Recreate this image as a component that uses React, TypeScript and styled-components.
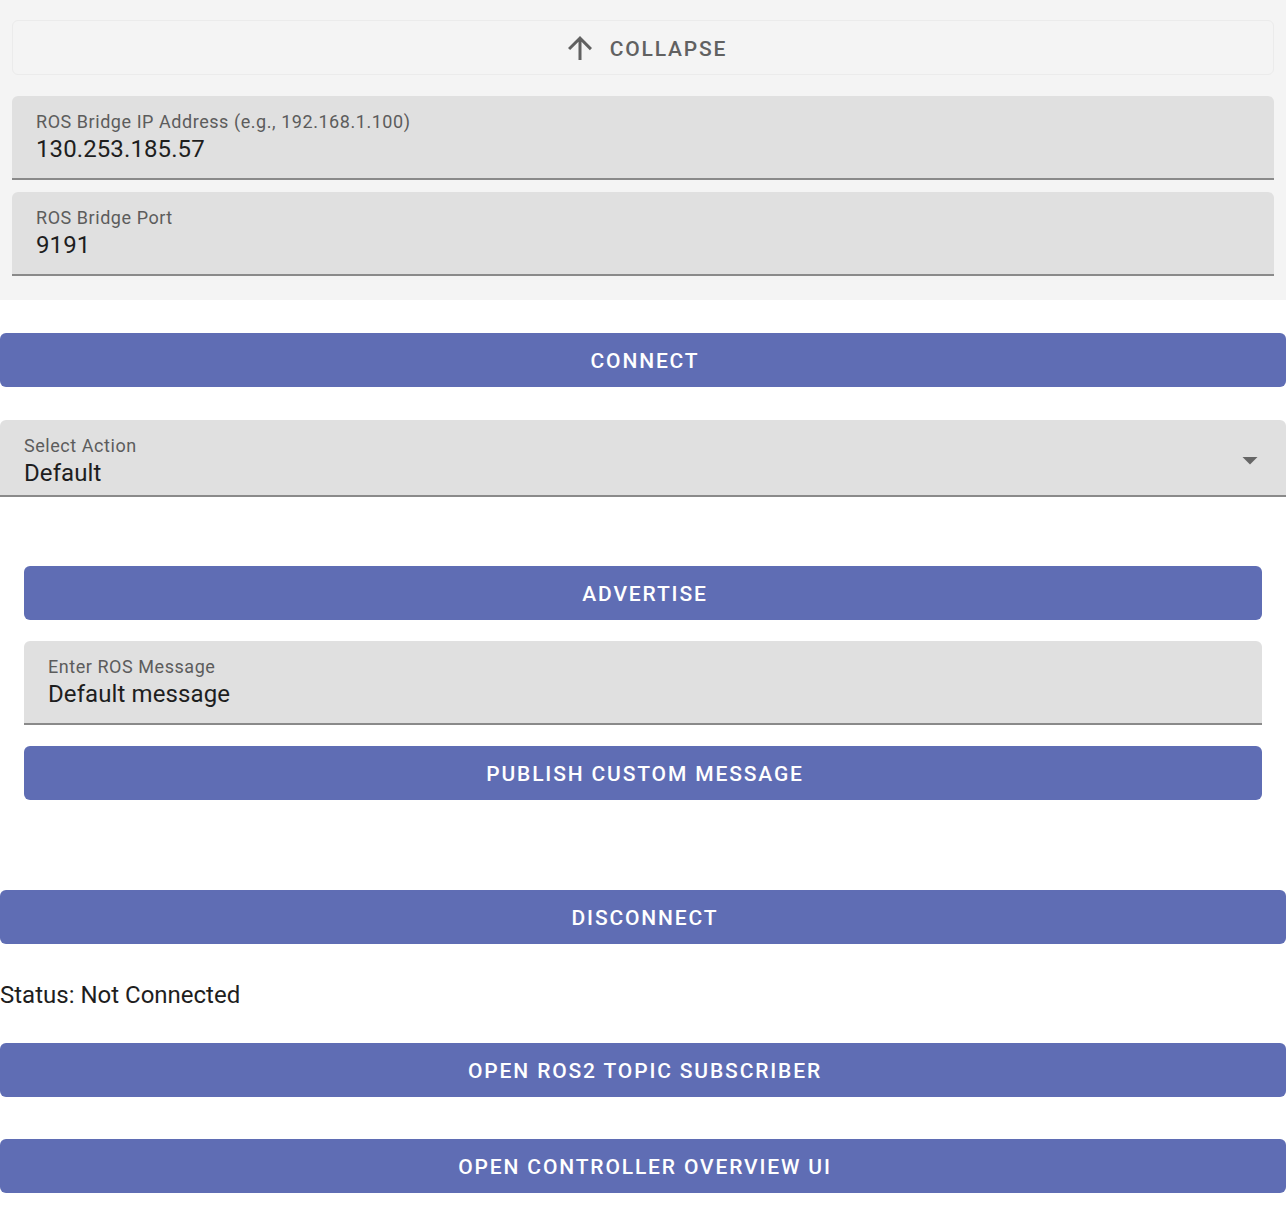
import React, { FC } from "react";
import styled, { createGlobalStyle } from "styled-components";

const GlobalStyle = createGlobalStyle`
  body {
    margin: 0;
    background: #ffffff;
    font-family: Roboto, "Liberation Sans", sans-serif;
  }
`;

const Colors = {
  Primary: "#5f6db4",
  Panel: "#f4f4f4",
  Field: "#e0e0e0",
  Underline: "#8a8a8a",
  Label: "#5c5c5c",
  Text: "#1e1e1e",
};

interface FieldProps {
  label: string;
  value: string;
}

const TextField: FC<FieldProps> = ({ label, value }) => (
  <FieldBox>
    <FieldLabel>{label}</FieldLabel>
    <FieldValue>{value}</FieldValue>
  </FieldBox>
);

const SelectField: FC<FieldProps> = ({ label, value }) => (
  <SelectBox>
    <div>
      <FieldLabel>{label}</FieldLabel>
      <FieldValue>{value}</FieldValue>
    </div>
    <svg width="36" height="36" viewBox="0 0 24 24">
      <path d="M7 10l5 5 5-5z" fill="#666666" />
    </svg>
  </SelectBox>
);

const App: FC = () => {
  return (
    <>
      <GlobalStyle />
      <Page>
        <SettingsPanel>
          <CollapseBar>
            <svg width="36" height="36" viewBox="0 0 24 24">
              <path
                d="M4 12l1.41 1.41L11 7.83V20h2V7.83l5.58 5.59L20 12l-8-8-8 8z"
                fill="#616161"
              />
            </svg>
            <span>Collapse</span>
          </CollapseBar>
          <PanelFields>
            <TextField label="ROS Bridge IP Address (e.g., 192.168.1.100)" value="130.253.185.57" />
            <TextField label="ROS Bridge Port" value="9191" />
          </PanelFields>
        </SettingsPanel>

        <Button $top={33}>Connect</Button>

        <SelectWrap>
          <SelectField label="Select Action" value="Default" />
        </SelectWrap>

        <ActionSection>
          <Button>Advertise</Button>
          <TextField label="Enter ROS Message" value="Default message" />
          <Button>Publish Custom Message</Button>
        </ActionSection>

        <Button $top={90}>Disconnect</Button>
        <Status>Status: Not Connected</Status>
        <Button>Open ROS2 Topic Subscriber</Button>
        <Button $top={42}>Open Controller Overview UI</Button>
      </Page>
    </>
  );
};

export default App;

const Page = styled.div`
  width: 100%;
  display: flex;
  flex-direction: column;
  padding-bottom: 33px;
`;

const SettingsPanel = styled.section`
  background-color: ${Colors.Panel};
  padding: 20px 12px 24px;
  display: flex;
  flex-direction: column;
`;

const CollapseBar = styled.div`
  height: 55px;
  box-sizing: border-box;
  border: 1px solid #ebebeb;
  border-radius: 6px;
  padding: 2px 0 0 3px;
  display: flex;
  align-items: center;
  justify-content: center;
  gap: 12px;
  color: #616161;
  font-size: 21px;
  font-weight: 500;
  letter-spacing: 1.8px;
  text-transform: uppercase;

  svg {
    margin-top: -2px;
  }
`;

const PanelFields = styled.div`
  margin-top: 21px;
  display: flex;
  flex-direction: column;
  gap: 12px;
`;

const FieldBox = styled.div`
  background-color: ${Colors.Field};
  border-radius: 6px 6px 0 0;
  border-bottom: 2px solid ${Colors.Underline};
  padding: 14px 24px 14px;
  display: flex;
  flex-direction: column;
`;

const FieldLabel = styled.div`
  font-size: 18px;
  line-height: 24px;
  letter-spacing: 0.55px;
  color: ${Colors.Label};
`;

const FieldValue = styled.div`
  font-size: 24px;
  line-height: 30px;
  letter-spacing: 0.1px;
  color: ${Colors.Text};
`;

const SelectWrap = styled.div`
  margin-top: 33px;
`;

const SelectBox = styled.div`
  background-color: ${Colors.Field};
  border-radius: 6px 6px 0 0;
  border-bottom: 2px solid ${Colors.Underline};
  padding: 14px 18px 7px 24px;
  display: flex;
  align-items: center;
  justify-content: space-between;

  svg {
    margin-top: -2px;
  }
`;

const ActionSection = styled.section`
  margin-top: 69px;
  padding: 0 24px;
  display: flex;
  flex-direction: column;
  gap: 21px;
`;

const Button = styled.button<{ $top?: number }>`
  margin-top: ${p => (p.$top !== undefined ? `${p.$top}px` : "0")};
  height: 54px;
  width: 100%;
  border: none;
  border-radius: 6px;
  padding: 2px 16px 0 20px;
  background-color: ${Colors.Primary};
  color: #ffffff;
  font-family: Roboto, "Liberation Sans", sans-serif;
  font-size: 21px;
  font-weight: 500;
  letter-spacing: 1.85px;
  text-transform: uppercase;
  cursor: pointer;
`;

const Status = styled.p`
  margin: 33px 0 30px;
  font-size: 24px;
  line-height: 36px;
  color: ${Colors.Text};
`;
